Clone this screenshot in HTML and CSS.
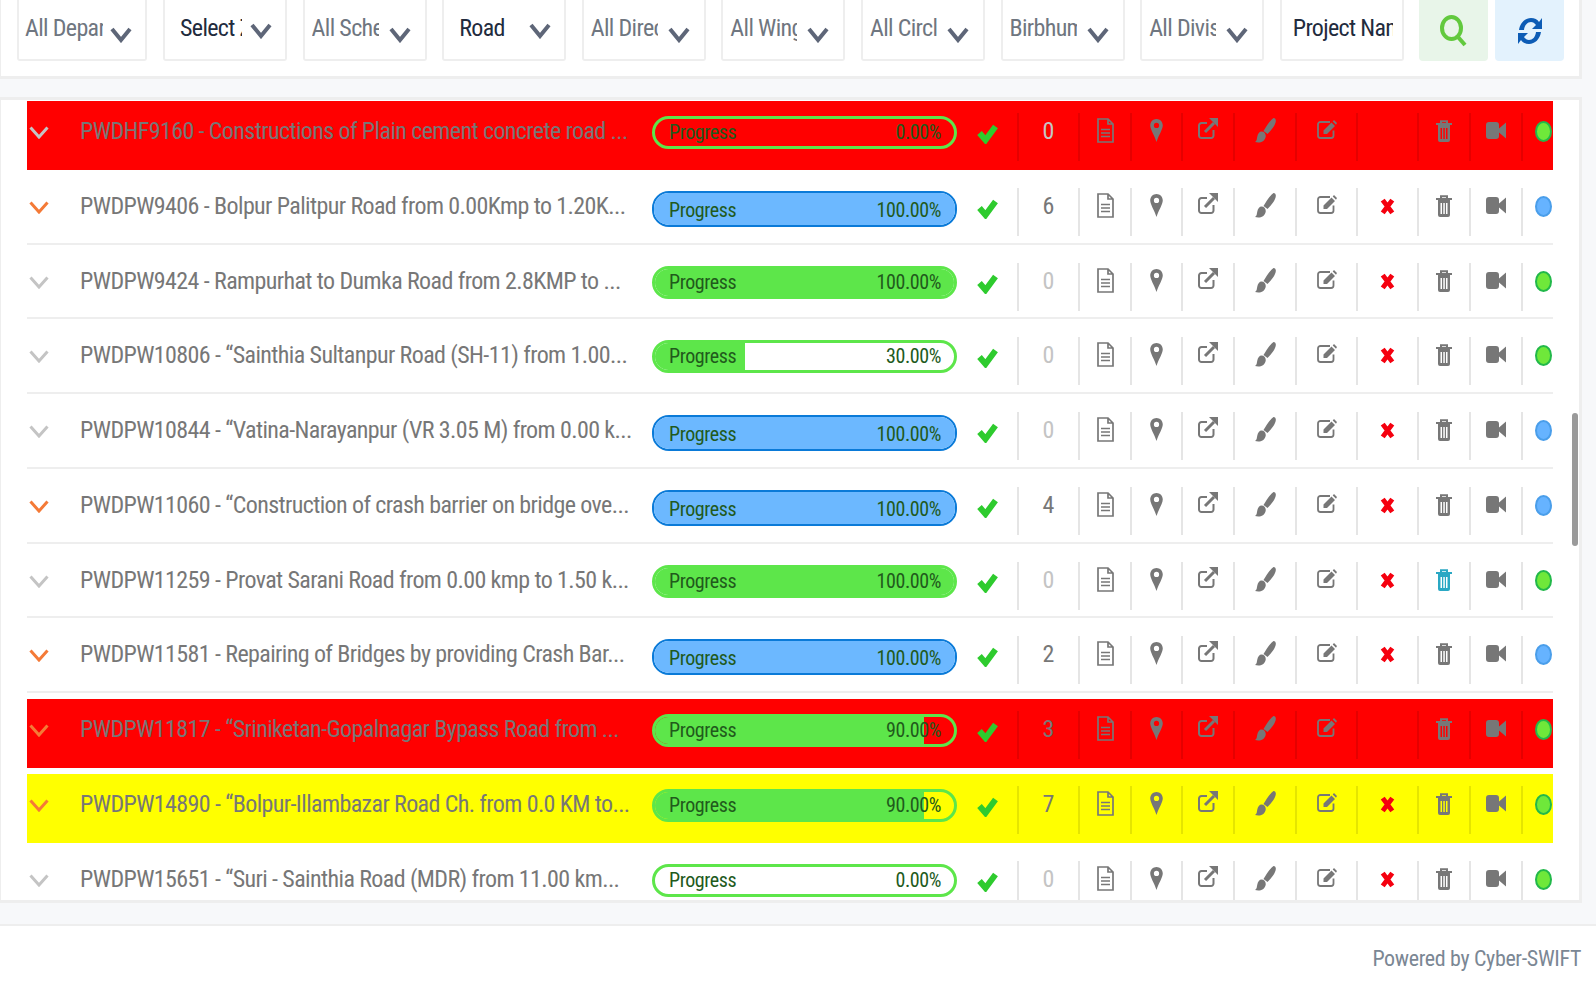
FILE: index.html
```html
<!DOCTYPE html>
<html lang="en">
<head>
<meta charset="utf-8">
<title>Projects</title>
<link rel="stylesheet" href="styles.css">
</head>
<body>
<svg class="defs" aria-hidden="true">
  <symbol id="i-sel" viewBox="0 0 22 16"><path d="M2 2 L11 13 L20 2" fill="none" stroke="currentColor" stroke-width="4"/></symbol>
  <symbol id="i-chev" viewBox="0 0 20 13"><path d="M1.5 1.5 L10 11 L18.5 1.5" fill="none" stroke="currentColor" stroke-width="3"/></symbol>
  <symbol id="i-check" viewBox="0 0 21 21"><path d="M2.5 10 L8.5 17 L18.5 3.5" fill="none" stroke="#2ecb2e" stroke-width="6"/></symbol>
  <symbol id="i-file" viewBox="0 0 17 25"><path d="M1 1 H11 L16 6 V24 H1 Z M11 1 V6 H16 M4 11.5 H13 M4 15 H13 M4 18.5 H13" fill="none" stroke="currentColor" stroke-width="1.7"/></symbol>
  <symbol id="i-pin" viewBox="0 0 12 22"><path fill-rule="evenodd" fill="currentColor" d="M6 0 C2.7 0 0 2.7 0 6.2 C0 10 4.2 16 6 22 C7.8 16 12 10 12 6.2 C12 2.7 9.3 0 6 0 Z M6 3.7 A2.5 2.5 0 1 1 6 8.7 A2.5 2.5 0 1 1 6 3.7 Z"/></symbol>
  <symbol id="i-ext" viewBox="0 0 20 21"><path d="M9 5 H3.5 A2.5 2.5 0 0 0 1 7.5 V17.5 A2.5 2.5 0 0 0 3.5 20 H13 A2.5 2.5 0 0 0 15.5 17.5 V12" fill="none" stroke="currentColor" stroke-width="2"/><path d="M7 14 L16 5" fill="none" stroke="currentColor" stroke-width="3"/><path d="M11 0 H20 V9 Z" fill="currentColor"/></symbol>
  <symbol id="i-brush" viewBox="0 0 21 25"><path fill="currentColor" d="M18.5 0 C21 0 21.5 3 20 6 C18.5 9.5 15.5 13 12.5 16 L8.5 13 C10.5 9.5 14.5 2.5 18.5 0 Z M6.5 13.5 C9.5 13.5 11.5 16.5 10.5 19.5 C9.5 23.5 5 25.5 0 24 C2 23 1.8 20.5 2.3 18.5 C2.8 15.5 4.5 13.5 6.5 13.5 Z"/></symbol>
  <symbol id="i-edit" viewBox="0 0 20 19"><path d="M16.5 10.5 V15.5 A2.5 2.5 0 0 1 14 18 H3.5 A2.5 2.5 0 0 1 1 15.5 V4.5 A2.5 2.5 0 0 1 3.5 2 H13" fill="none" stroke="currentColor" stroke-width="1.8"/><path fill="currentColor" d="M6.5 10.5 L14.5 2.5 L18 6 L10 14 H6.5 Z M15.7 1.5 L17 0 L20 3 L19 4.7 Z"/></symbol>
  <symbol id="i-x" viewBox="0 0 13 16"><path d="M2 2 L11 14 M11 2 L2 14" fill="none" stroke="#f5000f" stroke-width="4.6"/></symbol>
  <symbol id="i-trash" viewBox="0 0 16 22"><path d="M5 4 V1.2 H11 V4 M0 4 H16" fill="none" stroke="currentColor" stroke-width="2"/><path fill-rule="evenodd" fill="currentColor" d="M2 5 H14 V20 A2 2 0 0 1 12 22 H4 A2 2 0 0 1 2 20 Z M4.5 8 V19 H6 V8 Z M7.3 8 V19 H8.8 V8 Z M10 8 V19 H11.5 V8 Z"/></symbol>
  <symbol id="i-cam" viewBox="0 0 20 17"><path fill="currentColor" d="M3 0 H10 A3 3 0 0 1 13 3 V6.5 L20 0.5 V16.5 L13 10.5 V14 A3 3 0 0 1 10 17 H3 A3 3 0 0 1 0 14 V3 A3 3 0 0 1 3 0 Z"/></symbol>
  <symbol id="i-search" viewBox="0 0 27 32"><ellipse cx="11.5" cy="13" rx="9.5" ry="11" fill="none" stroke="#62c93e" stroke-width="4"/><path d="M18 22 L25 30" fill="none" stroke="#62c93e" stroke-width="4"/></symbol>
  <symbol id="i-refresh" viewBox="0 0 24 28"><path fill="#0d5cb5" d="M1 13 C2 6 7 1 13 1 C16.5 1 19.5 2.5 21 5 L24 1 V12 H14 L18 8 C16.5 6 15 5 13 5 C9.5 5 6.5 8 6 13 Z"/><path fill="#0d5cb5" transform="rotate(180 12 14)" d="M1 13 C2 6 7 1 13 1 C16.5 1 19.5 2.5 21 5 L24 1 V12 H14 L18 8 C16.5 6 15 5 13 5 C9.5 5 6.5 8 6 13 Z"/></symbol>
</svg>

<section class="panel filters">
  <div class="sel"><span class="sel-text">All Department</span><svg class="sel-chev"><use href="#i-sel"/></svg></div>
  <div class="sel pick"><span class="sel-text">Select Zone</span><svg class="sel-chev"><use href="#i-sel"/></svg></div>
  <div class="sel"><span class="sel-text">All Scheme</span><svg class="sel-chev"><use href="#i-sel"/></svg></div>
  <div class="sel pick"><span class="sel-text">Road</span><svg class="sel-chev"><use href="#i-sel"/></svg></div>
  <div class="sel"><span class="sel-text">All Directorate</span><svg class="sel-chev"><use href="#i-sel"/></svg></div>
  <div class="sel"><span class="sel-text">All Wing</span><svg class="sel-chev"><use href="#i-sel"/></svg></div>
  <div class="sel"><span class="sel-text">All Circle</span><svg class="sel-chev"><use href="#i-sel"/></svg></div>
  <div class="sel"><span class="sel-text">Birbhum</span><svg class="sel-chev"><use href="#i-sel"/></svg></div>
  <div class="sel"><span class="sel-text">All Division</span><svg class="sel-chev"><use href="#i-sel"/></svg></div>
  <div class="sel input"><span class="sel-text">Project Name</span></div>
  <div class="btn btn-search"><svg class="ic-search"><use href="#i-search"/></svg></div>
  <div class="btn btn-refresh"><svg class="ic-refresh"><use href="#i-refresh"/></svg></div>
</section>

<section class="panel list">
  <div class="row row-red">
    <div class="c-chev mute"><svg><use href="#i-chev"/></svg></div>
    <div class="c-title">PWDHF9160 - Constructions of Plain cement concrete road ...</div>
    <div class="bar"><div class="fill"></div><div class="labels"><span>Progress</span><span>0.00%</span></div></div>
    <div class="c-check"><svg><use href="#i-check"/></svg></div>
    <div class="cell num zero">0</div>
    <div class="cell w52"><svg class="ic-file"><use href="#i-file"/></svg></div>
    <div class="cell w51"><svg class="ic-pin"><use href="#i-pin"/></svg></div>
    <div class="cell w52"><svg class="ic-ext"><use href="#i-ext"/></svg></div>
    <div class="cell w62"><svg class="ic-brush"><use href="#i-brush"/></svg></div>
    <div class="cell w61"><svg class="ic-edit"><use href="#i-edit"/></svg></div>
    <div class="cell w61"></div>
    <div class="cell w52"><svg class="ic-trash"><use href="#i-trash"/></svg></div>
    <div class="cell w52"><svg class="ic-cam"><use href="#i-cam"/></svg></div>
    <div class="cell w31"><span class="dot"></span></div>
  </div>
  <div class="row">
    <div class="c-chev hot"><svg><use href="#i-chev"/></svg></div>
    <div class="c-title">PWDPW9406 - Bolpur Palitpur Road from 0.00Kmp to 1.20K...</div>
    <div class="bar blue"><div class="fill" style="width:100%"></div><div class="labels"><span>Progress</span><span>100.00%</span></div></div>
    <div class="c-check"><svg><use href="#i-check"/></svg></div>
    <div class="cell num">6</div>
    <div class="cell w52"><svg class="ic-file"><use href="#i-file"/></svg></div>
    <div class="cell w51"><svg class="ic-pin"><use href="#i-pin"/></svg></div>
    <div class="cell w52"><svg class="ic-ext"><use href="#i-ext"/></svg></div>
    <div class="cell w62"><svg class="ic-brush"><use href="#i-brush"/></svg></div>
    <div class="cell w61"><svg class="ic-edit"><use href="#i-edit"/></svg></div>
    <div class="cell w61"><svg class="ic-x"><use href="#i-x"/></svg></div>
    <div class="cell w52"><svg class="ic-trash"><use href="#i-trash"/></svg></div>
    <div class="cell w52"><svg class="ic-cam"><use href="#i-cam"/></svg></div>
    <div class="cell w31"><span class="dot dot-blue"></span></div>
  </div>
  <div class="row">
    <div class="c-chev mute"><svg><use href="#i-chev"/></svg></div>
    <div class="c-title">PWDPW9424 - Rampurhat to Dumka Road from 2.8KMP to ...</div>
    <div class="bar"><div class="fill" style="width:100%"></div><div class="labels"><span>Progress</span><span>100.00%</span></div></div>
    <div class="c-check"><svg><use href="#i-check"/></svg></div>
    <div class="cell num zero">0</div>
    <div class="cell w52"><svg class="ic-file"><use href="#i-file"/></svg></div>
    <div class="cell w51"><svg class="ic-pin"><use href="#i-pin"/></svg></div>
    <div class="cell w52"><svg class="ic-ext"><use href="#i-ext"/></svg></div>
    <div class="cell w62"><svg class="ic-brush"><use href="#i-brush"/></svg></div>
    <div class="cell w61"><svg class="ic-edit"><use href="#i-edit"/></svg></div>
    <div class="cell w61"><svg class="ic-x"><use href="#i-x"/></svg></div>
    <div class="cell w52"><svg class="ic-trash"><use href="#i-trash"/></svg></div>
    <div class="cell w52"><svg class="ic-cam"><use href="#i-cam"/></svg></div>
    <div class="cell w31"><span class="dot"></span></div>
  </div>
  <div class="row">
    <div class="c-chev mute"><svg><use href="#i-chev"/></svg></div>
    <div class="c-title">PWDPW10806 - “Sainthia Sultanpur Road (SH-11) from 1.00...</div>
    <div class="bar"><div class="fill" style="width:30%"></div><div class="labels"><span>Progress</span><span>30.00%</span></div></div>
    <div class="c-check"><svg><use href="#i-check"/></svg></div>
    <div class="cell num zero">0</div>
    <div class="cell w52"><svg class="ic-file"><use href="#i-file"/></svg></div>
    <div class="cell w51"><svg class="ic-pin"><use href="#i-pin"/></svg></div>
    <div class="cell w52"><svg class="ic-ext"><use href="#i-ext"/></svg></div>
    <div class="cell w62"><svg class="ic-brush"><use href="#i-brush"/></svg></div>
    <div class="cell w61"><svg class="ic-edit"><use href="#i-edit"/></svg></div>
    <div class="cell w61"><svg class="ic-x"><use href="#i-x"/></svg></div>
    <div class="cell w52"><svg class="ic-trash"><use href="#i-trash"/></svg></div>
    <div class="cell w52"><svg class="ic-cam"><use href="#i-cam"/></svg></div>
    <div class="cell w31"><span class="dot"></span></div>
  </div>
  <div class="row">
    <div class="c-chev mute"><svg><use href="#i-chev"/></svg></div>
    <div class="c-title">PWDPW10844 - “Vatina-Narayanpur (VR 3.05 M) from 0.00 k...</div>
    <div class="bar blue"><div class="fill" style="width:100%"></div><div class="labels"><span>Progress</span><span>100.00%</span></div></div>
    <div class="c-check"><svg><use href="#i-check"/></svg></div>
    <div class="cell num zero">0</div>
    <div class="cell w52"><svg class="ic-file"><use href="#i-file"/></svg></div>
    <div class="cell w51"><svg class="ic-pin"><use href="#i-pin"/></svg></div>
    <div class="cell w52"><svg class="ic-ext"><use href="#i-ext"/></svg></div>
    <div class="cell w62"><svg class="ic-brush"><use href="#i-brush"/></svg></div>
    <div class="cell w61"><svg class="ic-edit"><use href="#i-edit"/></svg></div>
    <div class="cell w61"><svg class="ic-x"><use href="#i-x"/></svg></div>
    <div class="cell w52"><svg class="ic-trash"><use href="#i-trash"/></svg></div>
    <div class="cell w52"><svg class="ic-cam"><use href="#i-cam"/></svg></div>
    <div class="cell w31"><span class="dot dot-blue"></span></div>
  </div>
  <div class="row">
    <div class="c-chev hot"><svg><use href="#i-chev"/></svg></div>
    <div class="c-title">PWDPW11060 - “Construction of crash barrier on bridge ove...</div>
    <div class="bar blue"><div class="fill" style="width:100%"></div><div class="labels"><span>Progress</span><span>100.00%</span></div></div>
    <div class="c-check"><svg><use href="#i-check"/></svg></div>
    <div class="cell num">4</div>
    <div class="cell w52"><svg class="ic-file"><use href="#i-file"/></svg></div>
    <div class="cell w51"><svg class="ic-pin"><use href="#i-pin"/></svg></div>
    <div class="cell w52"><svg class="ic-ext"><use href="#i-ext"/></svg></div>
    <div class="cell w62"><svg class="ic-brush"><use href="#i-brush"/></svg></div>
    <div class="cell w61"><svg class="ic-edit"><use href="#i-edit"/></svg></div>
    <div class="cell w61"><svg class="ic-x"><use href="#i-x"/></svg></div>
    <div class="cell w52"><svg class="ic-trash"><use href="#i-trash"/></svg></div>
    <div class="cell w52"><svg class="ic-cam"><use href="#i-cam"/></svg></div>
    <div class="cell w31"><span class="dot dot-blue"></span></div>
  </div>
  <div class="row">
    <div class="c-chev mute"><svg><use href="#i-chev"/></svg></div>
    <div class="c-title">PWDPW11259 - Provat Sarani Road from 0.00 kmp to 1.50 k...</div>
    <div class="bar"><div class="fill" style="width:100%"></div><div class="labels"><span>Progress</span><span>100.00%</span></div></div>
    <div class="c-check"><svg><use href="#i-check"/></svg></div>
    <div class="cell num zero">0</div>
    <div class="cell w52"><svg class="ic-file"><use href="#i-file"/></svg></div>
    <div class="cell w51"><svg class="ic-pin"><use href="#i-pin"/></svg></div>
    <div class="cell w52"><svg class="ic-ext"><use href="#i-ext"/></svg></div>
    <div class="cell w62"><svg class="ic-brush"><use href="#i-brush"/></svg></div>
    <div class="cell w61"><svg class="ic-edit"><use href="#i-edit"/></svg></div>
    <div class="cell w61"><svg class="ic-x"><use href="#i-x"/></svg></div>
    <div class="cell w52 teal"><svg class="ic-trash"><use href="#i-trash"/></svg></div>
    <div class="cell w52"><svg class="ic-cam"><use href="#i-cam"/></svg></div>
    <div class="cell w31"><span class="dot"></span></div>
  </div>
  <div class="row">
    <div class="c-chev hot"><svg><use href="#i-chev"/></svg></div>
    <div class="c-title">PWDPW11581 - Repairing of Bridges by providing Crash Bar...</div>
    <div class="bar blue"><div class="fill" style="width:100%"></div><div class="labels"><span>Progress</span><span>100.00%</span></div></div>
    <div class="c-check"><svg><use href="#i-check"/></svg></div>
    <div class="cell num">2</div>
    <div class="cell w52"><svg class="ic-file"><use href="#i-file"/></svg></div>
    <div class="cell w51"><svg class="ic-pin"><use href="#i-pin"/></svg></div>
    <div class="cell w52"><svg class="ic-ext"><use href="#i-ext"/></svg></div>
    <div class="cell w62"><svg class="ic-brush"><use href="#i-brush"/></svg></div>
    <div class="cell w61"><svg class="ic-edit"><use href="#i-edit"/></svg></div>
    <div class="cell w61"><svg class="ic-x"><use href="#i-x"/></svg></div>
    <div class="cell w52"><svg class="ic-trash"><use href="#i-trash"/></svg></div>
    <div class="cell w52"><svg class="ic-cam"><use href="#i-cam"/></svg></div>
    <div class="cell w31"><span class="dot dot-blue"></span></div>
  </div>
  <div class="row row-red">
    <div class="c-chev hot"><svg><use href="#i-chev"/></svg></div>
    <div class="c-title">PWDPW11817 - “Sriniketan-Gopalnagar Bypass Road from ...</div>
    <div class="bar"><div class="fill" style="width:90%"></div><div class="labels"><span>Progress</span><span>90.00%</span></div></div>
    <div class="c-check"><svg><use href="#i-check"/></svg></div>
    <div class="cell num">3</div>
    <div class="cell w52"><svg class="ic-file"><use href="#i-file"/></svg></div>
    <div class="cell w51"><svg class="ic-pin"><use href="#i-pin"/></svg></div>
    <div class="cell w52"><svg class="ic-ext"><use href="#i-ext"/></svg></div>
    <div class="cell w62"><svg class="ic-brush"><use href="#i-brush"/></svg></div>
    <div class="cell w61"><svg class="ic-edit"><use href="#i-edit"/></svg></div>
    <div class="cell w61"></div>
    <div class="cell w52"><svg class="ic-trash"><use href="#i-trash"/></svg></div>
    <div class="cell w52"><svg class="ic-cam"><use href="#i-cam"/></svg></div>
    <div class="cell w31"><span class="dot"></span></div>
  </div>
  <div class="row row-yellow">
    <div class="c-chev hot"><svg><use href="#i-chev"/></svg></div>
    <div class="c-title">PWDPW14890 - “Bolpur-Illambazar Road Ch. from 0.0 KM to...</div>
    <div class="bar"><div class="fill" style="width:90%"></div><div class="labels"><span>Progress</span><span>90.00%</span></div></div>
    <div class="c-check"><svg><use href="#i-check"/></svg></div>
    <div class="cell num">7</div>
    <div class="cell w52"><svg class="ic-file"><use href="#i-file"/></svg></div>
    <div class="cell w51"><svg class="ic-pin"><use href="#i-pin"/></svg></div>
    <div class="cell w52"><svg class="ic-ext"><use href="#i-ext"/></svg></div>
    <div class="cell w62"><svg class="ic-brush"><use href="#i-brush"/></svg></div>
    <div class="cell w61"><svg class="ic-edit"><use href="#i-edit"/></svg></div>
    <div class="cell w61"><svg class="ic-x"><use href="#i-x"/></svg></div>
    <div class="cell w52"><svg class="ic-trash"><use href="#i-trash"/></svg></div>
    <div class="cell w52"><svg class="ic-cam"><use href="#i-cam"/></svg></div>
    <div class="cell w31"><span class="dot"></span></div>
  </div>
  <div class="row">
    <div class="c-chev mute"><svg><use href="#i-chev"/></svg></div>
    <div class="c-title">PWDPW15651 - “Suri - Sainthia Road (MDR) from 11.00 km...</div>
    <div class="bar"><div class="fill"></div><div class="labels"><span>Progress</span><span>0.00%</span></div></div>
    <div class="c-check"><svg><use href="#i-check"/></svg></div>
    <div class="cell num zero">0</div>
    <div class="cell w52"><svg class="ic-file"><use href="#i-file"/></svg></div>
    <div class="cell w51"><svg class="ic-pin"><use href="#i-pin"/></svg></div>
    <div class="cell w52"><svg class="ic-ext"><use href="#i-ext"/></svg></div>
    <div class="cell w62"><svg class="ic-brush"><use href="#i-brush"/></svg></div>
    <div class="cell w61"><svg class="ic-edit"><use href="#i-edit"/></svg></div>
    <div class="cell w61"><svg class="ic-x"><use href="#i-x"/></svg></div>
    <div class="cell w52"><svg class="ic-trash"><use href="#i-trash"/></svg></div>
    <div class="cell w52"><svg class="ic-cam"><use href="#i-cam"/></svg></div>
    <div class="cell w31"><span class="dot"></span></div>
  </div>
</section>

<div class="scrollbar"></div>

<footer class="footer">Powered by Cyber-SWIFT</footer>
</body>
</html>
```
FILE: styles.css
```css
* { box-sizing: border-box; }
html, body { margin: 0; height: 981px; overflow: hidden; }
body {
  background: #f7f8fa;
  font-family: "Roboto Condensed", Roboto, sans-serif;
  color: #777;
  position: relative;
}
.defs { position: absolute; width: 0; height: 0; }
svg { display: block; }

.panel { background: #fff; width: 1582px; border: 0 solid #eee; border-left-width: 1px; border-right-width: 3px; }

.filters {
  height: 79px;
  border-bottom-width: 3px;
  display: flex;
  padding-left: 16px;
  align-items: flex-start;
}
.sel {
  flex: none;
  width: 124px;
  height: 61px;
  margin-right: 15.6px;
  border: 2px solid #eee;
  border-top: 0;
  border-radius: 0 0 3px 3px;
  display: flex;
  align-items: center;
  padding: 0 0 4px 7px;
  font-size: 24px;
  letter-spacing: -0.65px;
  color: #6f7680;
}
.sel:first-child { width: 130.4px; padding-left: 6px; }
.sel-text { width: 67px; overflow: hidden; white-space: nowrap; }
.sel:first-child .sel-text { width: 78px; }
.sel-chev { width: 22px; height: 16px; margin: 14px 0 0 10px; color: #5e6678; }
.sel:first-child .sel-chev { margin-left: 7px; }
.pick { padding-left: 15px; color: #222b3d; }
.pick .sel-text { width: 62px; }
.pick .sel-chev { margin: 6px 0 0 8px; }
.input { padding-left: 11px; color: #222b3d; }
.input .sel-text { width: 100px; }
.btn {
  flex: none;
  width: 69px;
  height: 61px;
  margin-right: 7px;
  border-radius: 0 0 4px 4px;
  display: flex;
  align-items: center;
  justify-content: center;
}
.btn-search { background: #e8f5e9; }
.btn-refresh { background: #e3f2fd; }
.ic-search { width: 27px; height: 32px; }
.ic-refresh { width: 24px; height: 28px; }

.list {
  height: 806px;
  margin-top: 18px;
  border-top-width: 3px;
  border-bottom-width: 3px;
  padding-left: 26px;
  overflow: hidden;
}
.row {
  display: flex;
  width: 1526px;
  height: 68.75px;
  margin-top: 6px;
  border-bottom: 2px solid #eee;
  align-items: flex-start;
}
.list .row:first-child { margin-top: 1px; }
.row-red { background: #f00; border-color: transparent; }
.row-yellow { background: #ff0; border-color: transparent; }

.c-chev { width: 53px; padding: 25px 0 0 2px; flex: none; }
.c-chev svg { width: 20px; height: 13px; }
.mute { color: #c4c4c4; }
.hot { color: #f47a37; }
.c-title {
  width: 572px;
  flex: none;
  font-size: 24px;
  letter-spacing: -0.6px;
  line-height: 60px;
  white-space: nowrap;
}
.bar {
  position: relative;
  flex: none;
  width: 305px;
  height: 33px;
  margin-top: 15px;
  border: 3px solid #5de64a;
  border-radius: 17px;
  overflow: hidden;
  color: #215a1c;
  font-size: 20px;
  letter-spacing: -0.4px;
}
.fill { position: absolute; left: 0; top: 0; bottom: 0; width: 0; background: #5de64a; }
.labels { position: relative; display: flex; justify-content: space-between; padding: 0 13px 0 14px; line-height: 27px; }
.blue { height: 36px; border: 2px solid #0a7ad8; }
.blue .fill { background: #6cb8ff; }
.blue .labels { line-height: 34px; padding: 0 14px 0 15px; }

.c-check { width: 60px; flex: none; padding: 22px 0 0 20px; }
.c-check svg { width: 21px; height: 21px; }

.cell {
  flex: none;
  height: 48px;
  margin-top: 12px;
  border-left: 2px solid rgba(0,0,0,.1);
  display: flex;
  justify-content: center;
  padding-top: 5px;
}
.num { width: 61px; font-size: 24px; line-height: 26px; }
.zero { color: #c4c4c4; }
.w31 { width: 31px; justify-content: flex-end; }
.w51 { width: 51px; }
.w52 { width: 52px; }
.w61 { width: 61px; }
.w62 { width: 62px; }
.ic-file { width: 17px; height: 25px; }
.ic-pin { width: 13px; height: 23px; margin-top: 1px; }
.ic-ext { width: 20px; height: 21px; }
.ic-brush { width: 21px; height: 25px; }
.ic-edit { width: 20px; height: 19px; margin-top: 2px; }
.ic-x { width: 15px; height: 17px; margin-top: 5px; }
.ic-trash { width: 16px; height: 22px; margin-top: 2px; }
.ic-cam { width: 20px; height: 17px; margin-top: 4px; }
.dot { width: 17px; height: 21px; margin-top: 3px; border-radius: 50%; border: 2px solid #22b84a; background: #6fe83a; }
.dot-blue { border-color: #4a9eea; background: #66b3ff; }
.teal { color: #2aa8c4; }

.scrollbar { position: absolute; left: 1572px; top: 413px; width: 6px; height: 133px; border-radius: 3px; background: #9a9a9a; }

.footer {
  margin-top: 21px;
  height: 57px;
  background: #fff;
  border-top: 2px solid #eee;
  text-align: right;
  padding-right: 15px;
  font-size: 22px;
  letter-spacing: -0.35px;
  line-height: 66px;
  color: #7b8794;
}
```
